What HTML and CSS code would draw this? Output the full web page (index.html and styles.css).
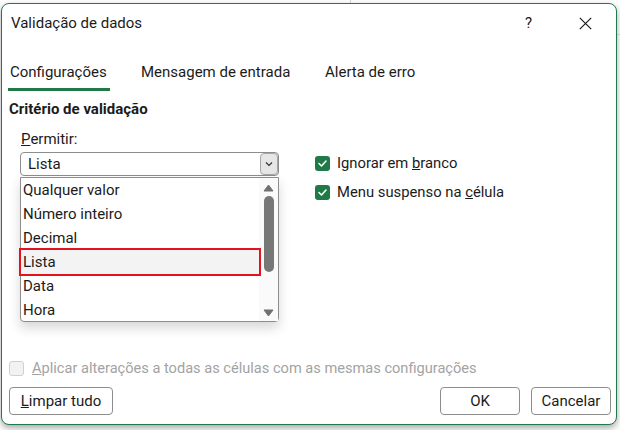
FILE: index.html
```html
<!DOCTYPE html>
<html lang="pt">
<head>
<meta charset="utf-8">
<title>Validação de dados</title>
<link rel="stylesheet" href="styles.css">
</head>
<body>
<div class="backdrop">
  <div class="dialog">
    <div class="titlebar">
      <span class="title">Validação de dados</span>
      <span class="help">?</span>
      <span class="close">
        <svg width="13" height="13" viewBox="0 0 13 13"><path d="M0.8 0.8 L12.2 12.2 M12.2 0.8 L0.8 12.2" stroke="#1b1b1b" stroke-width="1.2" fill="none"/></svg>
      </span>
    </div>
    <div class="tabs">
      <div class="tab active">Configurações</div>
      <div class="tab tab2">Mensagem de entrada</div>
      <div class="tab">Alerta de erro</div>
    </div>
    <div class="section-title">Critério de validação</div>
    <div class="criteria">
      <div class="left">
        <div class="label"><u>P</u>ermitir:</div>
        <div class="combo">
          <span class="combo-text">Lista</span>
          <span class="combo-btn">
            <svg width="8" height="6" viewBox="0 0 8 6"><path d="M1 1.5 L4 4.5 L7 1.5" stroke="#333" stroke-width="1.2" fill="none"/></svg>
          </span>
          <div class="list">
            <div class="items">
              <div class="item">Qualquer valor</div>
              <div class="item">Número inteiro</div>
              <div class="item">Decimal</div>
              <div class="item selected">Lista</div>
              <div class="item">Data</div>
              <div class="item">Hora</div>
            </div>
            <div class="scrollbar">
              <svg class="arrow" width="11" height="8" viewBox="0 0 11 8"><path d="M1 7 L5.5 1 L10 7 Z" fill="#707070" stroke="#707070" stroke-width="1" stroke-linejoin="round"/></svg>
              <div class="thumb"></div>
              <svg class="arrow" width="11" height="8" viewBox="0 0 11 8"><path d="M1 1 L5.5 7 L10 1 Z" fill="#707070" stroke="#707070" stroke-width="1" stroke-linejoin="round"/></svg>
            </div>
          </div>
        </div>
      </div>
      <div class="right">
        <div class="check-row">
          <span class="box checked"><svg width="11" height="9" viewBox="0 0 11 9"><path d="M2 4.5 L4.5 7 L9 2" stroke="#fff" stroke-width="1.6" fill="none" stroke-linecap="round" stroke-linejoin="round"/></svg></span>
          <span>Ignorar em <u>b</u>ranco</span>
        </div>
        <div class="check-row">
          <span class="box checked"><svg width="11" height="9" viewBox="0 0 11 9"><path d="M2 4.5 L4.5 7 L9 2" stroke="#fff" stroke-width="1.6" fill="none" stroke-linecap="round" stroke-linejoin="round"/></svg></span>
          <span>Menu suspenso na <u>c</u>élula</span>
        </div>
      </div>
    </div>
    <div class="apply-row">
      <span class="box disabled"></span>
      <span><u>A</u>plicar alterações a todas as células com as mesmas configurações</span>
    </div>
    <div class="buttons">
      <button class="btn btn-clear"><u>L</u>impar tudo</button>
      <span class="spacer"></span>
      <button class="btn btn-ok">OK</button>
      <button class="btn btn-cancel">Cancelar</button>
    </div>
  </div>
</div>
</body>
</html>
```
FILE: styles.css
```css
* { box-sizing: border-box; }
html, body { margin: 0; padding: 0; }
body {
  width: 620px;
  height: 430px;
  overflow: hidden;
  background: #f7f7f7;
  font-family: Roboto, "Noto Sans", sans-serif;
  font-size: 15px;
  color: #1b1b1b;
}
.backdrop {
  padding: 3px 0 0 1px;
  height: 430px;
  background:
    linear-gradient(#d8d8d8, #d8d8d8) 350px 0 / 1px 3px no-repeat,
    linear-gradient(#e4e4e4, #e4e4e4) 617px 34px / 3px 1px no-repeat,
    #ffffff;
}
.dialog {
  width: 616px;
  height: 422px;
  border: 1px solid #1f7a47;
  border-radius: 8px;
  background: #ffffff;
  box-shadow: 0 3px 7px rgba(0, 0, 0, 0.35);
  display: flex;
  flex-direction: column;
  padding: 0 5px 9px 7px;
}
.titlebar {
  height: 38px;
  display: flex;
  align-items: center;
  padding-left: 2px;
}
.title { flex: 1; }
.help { width: 53px; padding-left: 3px; }
.close { width: 36px; display: flex; align-items: center; padding-left: 4px; }
.tabs {
  margin-top: 14px;
  display: flex;
  height: 35px;
}
.tab {
  height: 32px;
  display: flex;
  align-items: center;
  padding-left: 1px;
  position: relative;
}
.tab.active { width: 131px; }
.tab.active::after {
  content: "";
  position: absolute;
  left: -1px;
  bottom: -3px;
  width: 102px;
  height: 3px;
  background: #1f7a47;
}
.tab2 { width: 184px; }
.section-title {
  margin-top: 8px;
  height: 20px;
  line-height: 20px;
  font-weight: bold;
}
.criteria {
  margin-top: 10px;
  display: flex;
  padding-left: 11px;
}
.left { width: 259px; }
.label { height: 20px; line-height: 20px; padding-left: 1px; }
.combo {
  margin-top: 3px;
  height: 24px;
  border: 1px solid #8d8d8d;
  border-radius: 4px;
  display: flex;
  align-items: center;
  position: relative;
}
.combo-text { flex: 1; padding-left: 7px; }
.combo-btn {
  width: 18px;
  height: 22px;
  background: #e6e6e6;
  border: 1px solid #a6a6a6;
  border-radius: 4px;
  display: flex;
  align-items: center;
  justify-content: center;
}
.list {
  position: absolute;
  left: -1px;
  top: 24px;
  width: 259px;
  height: 145px;
  border: 1px solid #8d8d8d;
  border-radius: 0 0 4px 4px;
  background: #ffffff;
  box-shadow: 0 6px 12px rgba(0, 0, 0, 0.16);
  display: flex;
  z-index: 2;
}
.items { flex: 1; }
.item {
  height: 24px;
  line-height: 24px;
  padding-left: 2px;
  position: relative;
}
.item.selected { background: #f3f3f3; }
.item.selected::after {
  content: "";
  position: absolute;
  left: -2px;
  right: -2px;
  top: -2px;
  bottom: -2px;
  border: 2px solid #e3121f;
  z-index: 3;
}
.scrollbar {
  width: 19px;
  background: #fafafa;
  display: flex;
  flex-direction: column;
  align-items: center;
  padding: 6px 0 4px;
}
.arrow { display: block; }
.thumb {
  width: 10px;
  height: 76px;
  margin-top: 4px;
  background: #777777;
  border-radius: 5px;
  flex: none;
}
.scrollbar .arrow:last-child { margin-top: auto; }
.right {
  margin-left: 36px;
  padding-top: 25px;
}
.check-row {
  height: 18px;
  display: flex;
  align-items: center;
  gap: 7px;
  margin-bottom: 11px;
  font-size: 14.8px;
}
.box {
  width: 15px;
  height: 15px;
  border-radius: 3px;
  display: inline-flex;
  align-items: center;
  justify-content: center;
  flex: none;
}
.box.checked { background: #1f7a47; }
.box.disabled { background: #f2f2f2; border: 1px solid #d0d0d0; }
.apply-row {
  margin-top: auto;
  height: 18px;
  display: flex;
  align-items: center;
  gap: 8px;
  color: #a3a3a3;
  margin-bottom: 10px;
  font-size: 14.6px;
}
.buttons {
  display: flex;
  gap: 11px;
}
.spacer { flex: 1; }
.btn {
  height: 28px;
  border: 1px solid #8d8d8d;
  border-radius: 4px;
  background: #ffffff;
  font-family: inherit;
  font-size: 15px;
  color: #1b1b1b;
  padding: 0;
}
.btn-clear { width: 104px; }
.btn-ok { width: 80px; }
.btn-cancel { width: 80px; }
```
